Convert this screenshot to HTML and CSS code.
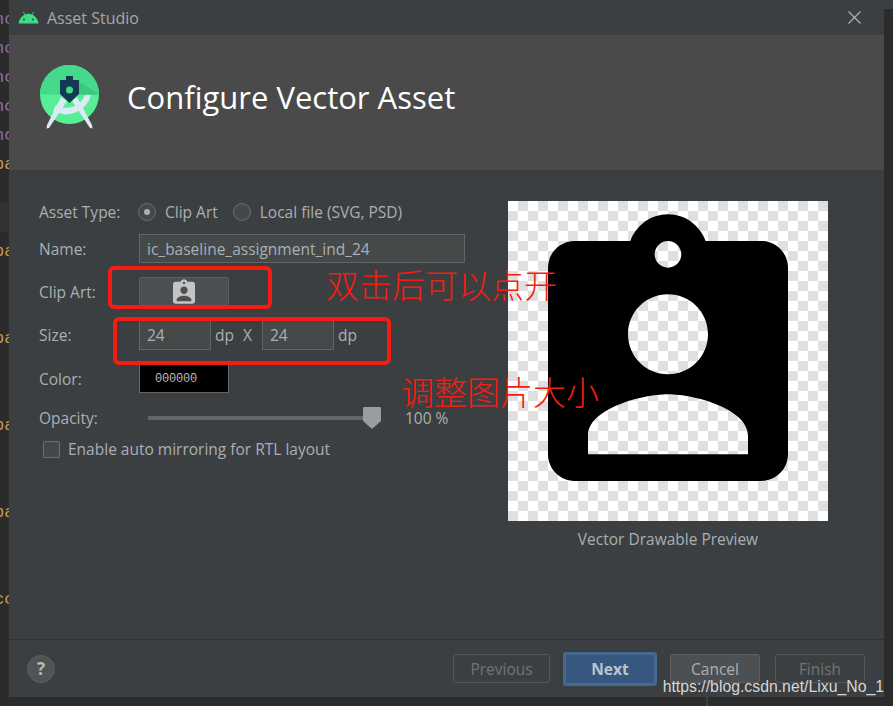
FILE: index.html
```html
<!DOCTYPE html>
<html>
<head>
    <meta charset="utf-8">
    <meta name="viewport" content="width=device-width, initial-scale=1">
    <title>Asset Studio</title>
    <link rel="stylesheet" href="styles.css">
</head>
<body>
    <!-- Editor behind the dialog, only a sliver shows -->
    <div class="editor">
        <div class="code purple">nc</div>
        <div class="code purple">nc</div>
        <div class="code purple">nc</div>
        <div class="code purple">nc</div>
        <div class="code purple">nc</div>
        <div class="code orange">pa</div>
        <div class="code caret-row"></div>
        <div class="code"></div>
        <div class="code orange">pa</div>
        <div class="code"></div>
        <div class="code"></div>
        <div class="code orange">pa</div>
        <div class="code"></div>
        <div class="code"></div>
        <div class="code orange">pa</div>
        <div class="code"></div>
        <div class="code"></div>
        <div class="code orange">pa</div>
        <div class="code"></div>
        <div class="code"></div>
        <div class="code orange">co</div>
    </div>

    <div class="dialog">
        <div class="titlebar">
            <svg class="title-icon" viewBox="0 0 21 13">
                <path d="M0.5 12.5C1 8.5 3.3 5.3 6.5 3.7L5 1.2 5.7 .8 7.3 3.4C8.3 3 9.4 2.8 10.5 2.8S12.7 3 13.7 3.4L15.3 .8 16 1.2 14.5 3.7C17.7 5.3 20 8.5 20.5 12.5Z" fill="#3ddc84"/>
                <circle cx="6" cy="8.5" r="1" fill="#3c3f41"/>
                <circle cx="15" cy="8.5" r="1" fill="#3c3f41"/>
            </svg>
            <span class="title-text">Asset Studio</span>
            <svg class="close-icon" viewBox="0 0 13 13">
                <path d="M.5 .5L12.5 12.5M12.5 .5L.5 12.5" stroke="#afb1b3" stroke-width="1.2" fill="none"/>
            </svg>
        </div>

        <div class="header">
            <svg class="logo" viewBox="36 62 66 70">
                <circle cx="69.5" cy="94.5" r="29.5" fill="#56ef96"/>
                <path d="M40 94.5a29.5 29.5 0 0 1 59 0Z" fill="#45d98c"/>
                <path d="M78 81L99 94.5H78Z" fill="#3fc583"/>
                <path d="M56 105a20 20 0 0 0 29-10h6a26 26 0 0 1-38 16Z" fill="#dceaf6"/>
                <path d="M61 97L67 101 49 128 46.500 128.500 47 125Z" fill="#dceaf6"/>
                <path d="M77 97L72 101 90 128 92.500 128.500 92 125Z" fill="#dceaf6"/>
                <path d="M66 76H73V80H79V94L69.500 103 60 94V80H66Z" fill="#123a52"/>
                <circle cx="69.500" cy="90" r="3.500" fill="#3ddc84"/>
            </svg>
            <h1 class="header-title">Configure Vector Asset</h1>
        </div>

        <div class="main">
            <div class="form">
                <div class="row row-radio">
                    <span class="label">Asset Type:</span>
                    <span class="radio radio-on"></span>
                    <span class="radio-text">Clip Art</span>
                    <span class="radio"></span>
                    <span class="radio-text">Local file (SVG, PSD)</span>
                </div>
                <div class="row">
                    <span class="label">Name:</span>
                    <div class="field field-name">ic_baseline_assignment_ind_24</div>
                </div>
                <div class="row">
                    <span class="label">Clip Art:</span>
                    <div class="clip-btn">
                        <svg class="clip-icon" viewBox="3 1 18 20">
                            <path fill-rule="evenodd" d="M19 3h-4.18C14.4 1.84 13.3 1 12 1c-1.3 0-2.4.84-2.82 2H5c-1.1 0-2 .9-2 2v14c0 1.1.9 2 2 2h14c1.1 0 2-.9 2-2V5c0-1.1-.9-2-2-2zm-7 0c.55 0 1 .45 1 1s-.45 1-1 1-1-.45-1-1 .45-1 1-1zm0 4c1.66 0 3 1.34 3 3s-1.34 3-3 3-3-1.34-3-3 1.34-3 3-3zm6 12H6v-1.4c0-2 4-3.1 6-3.1s6 1.1 6 3.1V19z"/>
                        </svg>
                    </div>
                </div>
                <div class="row row-size">
                    <span class="label">Size:</span>
                    <div class="field field-size">24</div>
                    <span class="unit">dp</span>
                    <span class="times">X</span>
                    <div class="field field-size">24</div>
                    <span class="unit">dp</span>
                </div>
                <div class="row">
                    <span class="label">Color:</span>
                    <div class="swatch">000000</div>
                </div>
                <div class="row row-opacity">
                    <span class="label">Opacity:</span>
                    <div class="slider">
                        <div class="track"></div>
                        <svg class="thumb" viewBox="0 0 18 22"><path d="M0 1Q0 0 1 0H17Q18 0 18 1V14L9 22 0 14Z"/></svg>
                    </div>
                    <span class="percent">100 %</span>
                </div>
                <div class="row-check">
                    <span class="checkbox"></span>
                    <span class="check-text">Enable auto mirroring for RTL layout</span>
                </div>
            </div>

            <div class="preview">
                <div class="preview-box">
                    <svg class="preview-icon" viewBox="0 0 24 24">
                        <path fill-rule="evenodd" d="M19 3h-4.18C14.4 1.84 13.3 1 12 1c-1.3 0-2.4.84-2.82 2H5c-1.1 0-2 .9-2 2v14c0 1.1.9 2 2 2h14c1.1 0 2-.9 2-2V5c0-1.1-.9-2-2-2zm-7 0c.55 0 1 .45 1 1s-.45 1-1 1-1-.45-1-1 .45-1 1-1zm0 4c1.66 0 3 1.34 3 3s-1.34 3-3 3-3-1.34-3-3 1.34-3 3-3zm6 12H6v-1.4c0-2 4-3.1 6-3.1s6 1.1 6 3.1V19z"/>
                    </svg>
                </div>
                <div class="preview-caption">Vector Drawable Preview</div>
            </div>
        </div>

        <div class="footer">
            <div class="help">?</div>
            <div class="buttons">
                <div class="btn btn-off btn-prev">Previous</div>
                <div class="btn btn-next">Next</div>
                <div class="btn btn-cancel">Cancel</div>
                <div class="btn btn-off btn-finish">Finish</div>
            </div>
        </div>
    </div>

    <!-- Annotations drawn on top of the screenshot -->
    <div class="mark mark-clip"></div>
    <div class="mark mark-size"></div>
    <div class="note note-clip">双击后可以点开</div>
    <div class="note note-size">调整图片大小</div>
    <div class="watermark">https://blog.csdn.net/Lixu_No_1</div>

    <div class="corner"></div>
    <div class="sash"></div>
</body>
</html>
```

FILE: styles.css
```css
* {
    box-sizing: border-box;
}
html, body {
    margin: 0;
    height: 706px;
    overflow: hidden;
}
body {
    position: relative;
    display: flex;
    background: #2b2b2b;
    font-family: "Open Sans", "Noto Sans", sans-serif;
    font-size: 15.5px;
    color: #a9b0b5;
}

/* Editor sliver */
.editor {
    width: 9px;
    flex-shrink: 0;
    overflow: hidden;
    padding-top: 5px;
    font-family: "Liberation Mono", monospace;
    font-size: 17px;
}
.code {
    height: 29px;
    line-height: 29px;
    margin-left: -6px;
    white-space: nowrap;
}
.caret-row {
    background: #323232;
    margin-top: 24px;
    margin-bottom: -24px;
}
.purple {
    color: #8a6fa8;
}
.orange {
    color: #c79a4e;
}

/* Dialog */
.dialog {
    width: 875px;
    height: 697px;
    display: flex;
    flex-direction: column;
    background: #3c3f41;
}
.titlebar {
    height: 35px;
    display: flex;
    align-items: center;
    padding-left: 9px;
}
.title-icon {
    width: 21px;
    height: 13px;
    margin-right: 8px;
}
.title-text {
    color: #a4a8ab;
    font-size: 16px;
}
.close-icon {
    width: 13px;
    height: 13px;
    margin-left: auto;
    margin-right: 23px;
}
.header {
    height: 135px;
    display: flex;
    align-items: center;
    background: #4a4a4a;
    padding: 0 0 11px 27px;
}
.logo {
    width: 66px;
    height: 70px;
}
.header-title {
    margin: 0 0 0 25px;
    font-size: 31px;
    font-weight: 400;
    color: #fff;
}

/* Form */
.main {
    flex: 1;
    display: flex;
}
.form {
    width: 456px;
    padding: 28px 0 0 30px;
}
.row {
    display: flex;
    align-items: center;
    height: 29px;
    margin-bottom: 14px;
}
.label {
    width: 100px;
    flex-shrink: 0;
}
.row-radio {
    height: 28px;
    margin-bottom: 8px;
}
.radio {
    width: 18px;
    height: 18px;
    border: 1px solid #6b6e70;
    border-radius: 50%;
    background: #43494a;
    display: flex;
    align-items: center;
    justify-content: center;
    margin-right: 9px;
    margin-left: -1px;
}
.radio-on::after {
    content: "";
    width: 6px;
    height: 6px;
    border-radius: 50%;
    background: #a9b0b5;
}
.radio-text {
    margin-right: 16px;
}
.field {
    height: 100%;
    background: #45494a;
    border: 1px solid #646464;
    display: flex;
    align-items: center;
    padding-left: 7px;
}
.field-name {
    width: 326px;
}
.row-size {
    height: 30px;
}
.field-size {
    width: 72px;
}
.unit {
    margin-left: 4px;
}
.times {
    margin: 0 10px 0 9px;
}
.clip-btn {
    width: 90px;
    height: 100%;
    background: #4c5052;
    border: 1px solid #5e6060;
    border-radius: 3px;
    display: flex;
    align-items: center;
    justify-content: center;
}
.clip-icon {
    width: 22px;
    height: 25px;
    fill: #c4c4c4;
}
.swatch {
    width: 90px;
    height: 100%;
    background: #000;
    border: 1px solid #646464;
    color: #bbb;
    font-family: "Liberation Mono", monospace;
    font-size: 12px;
    letter-spacing: -0.2px;
    padding-left: 15px;
    display: flex;
    align-items: center;
}
.row-opacity {
    height: 22px;
    margin-bottom: 11px;
}
.slider {
    width: 233px;
    margin-left: 9px;
    height: 22px;
    display: flex;
    align-items: center;
}
.track {
    width: 215px;
    height: 4px;
    background: #656565;
}
.thumb {
    width: 18px;
    height: 22px;
    fill: #9a9c9e;
}
.percent {
    margin-left: 24px;
}
.row-check {
    display: flex;
    align-items: center;
    padding-left: 4px;
    height: 18px;
}
.checkbox {
    width: 17px;
    height: 17px;
    border: 1px solid #6b6e70;
    border-radius: 2px;
    background: #43494a;
    margin-right: 8px;
}

/* Preview */
.preview {
    margin: 31px 0 0 43px;
    width: 320px;
}
.preview-box {
    width: 320px;
    height: 320px;
    background-color: #fff;
    background-image: conic-gradient(#dfdfdf 25%, #fff 0 50%, #dfdfdf 0 75%, #fff 0);
    background-size: 20px 20px;
}
.preview-icon {
    display: block;
    width: 320px;
    height: 320px;
    fill: #000;
}
.preview-caption {
    margin-top: 7px;
    text-align: center;
}

/* Footer */
.footer {
    height: 58px;
    border-top: 1px solid #323232;
    display: flex;
    align-items: center;
    padding: 0 19px 0 18px;
}
.help {
    width: 28px;
    height: 28px;
    border-radius: 50%;
    background: #505456;
    border: 1px solid #5a5e60;
    color: #bbb;
    font-weight: 700;
    font-size: 17px;
    display: flex;
    align-items: center;
    justify-content: center;
}
.buttons {
    margin-left: auto;
    display: flex;
    align-items: center;
}
.btn {
    height: 29px;
    display: flex;
    align-items: center;
    justify-content: center;
    border: 1px solid #5e6060;
    border-radius: 3px;
}
.btn-off {
    border-color: #55585a;
    color: #717476;
}
.btn-prev {
    width: 97px;
}
.btn-next {
    width: 94px;
    height: 34px;
    margin: 0 13px;
    background: #365880;
    border: 2px solid #44688f;
    box-shadow: inset 0 0 0 1px #4a6c93;
    color: #bbc3cb;
    font-weight: 700;
}
.btn-cancel {
    width: 90px;
    margin-right: 15px;
    background: #4c5052;
}
.btn-finish {
    width: 90px;
}

/* Annotations */
.mark {
    position: absolute;
    border: 4px solid #f51c10;
    border-radius: 6px;
}
.mark-clip {
    left: 108px;
    top: 266px;
    width: 164px;
    height: 43px;
}
.mark-size {
    left: 113px;
    top: 317px;
    width: 278px;
    height: 48px;
}
.note {
    position: absolute;
    color: #f51c10;
    font-family: "Noto Sans CJK SC", sans-serif;
    font-weight: 300;
    font-size: 33px;
    line-height: 40px;
    white-space: nowrap;
}
.note-clip {
    left: 326px;
    top: 264px;
}
.note-size {
    left: 401px;
    top: 371px;
}
.watermark {
    position: absolute;
    right: 9px;
    top: 678px;
    font-family: "Liberation Sans", sans-serif;
    font-size: 15.8px;
    color: #d6d6d6;
    white-space: nowrap;
}

/* Bits of the window behind */
.corner {
    position: absolute;
    right: 0;
    top: 0;
    width: 9px;
    height: 9px;
    background: #3c3f41;
}
.sash {
    position: absolute;
    left: 706px;
    top: 697px;
    width: 2px;
    height: 9px;
    background: #3c3f41;
}
```
